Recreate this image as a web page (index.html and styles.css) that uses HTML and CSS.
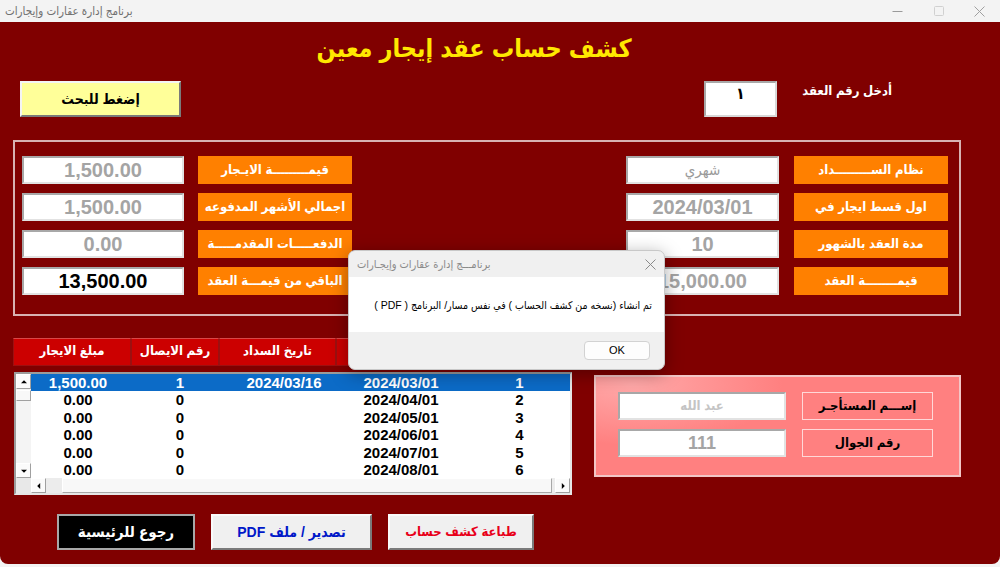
FILE: index.html
```html
<!DOCTYPE html>
<html lang="ar" dir="rtl">
<head>
    <meta charset="UTF-8">
    <title>برنامج إدارة عقارات وإيجارات</title>
    <link rel="stylesheet" href="styles.css">
</head>
<body>
    <div class="titlebar" dir="ltr">
        <span class="app-title">برنامج إدارة عقارات وإيجارات</span>
        <div class="win-buttons">
            <span><svg width="11" height="11" viewBox="0 0 11 11"><line x1="0.5" y1="5.5" x2="10.5" y2="5.5" stroke="#9a9a9a" stroke-width="1"/></svg></span>
            <span><svg width="11" height="11" viewBox="0 0 11 11"><rect x="1.5" y="0.5" width="9" height="9" rx="1" fill="none" stroke="#d0d0d0" stroke-width="1"/></svg></span>
            <span><svg width="11" height="11" viewBox="0 0 11 11"><path d="M0.5 0.5 L10.5 10.5 M10.5 0.5 L0.5 10.5" stroke="#a0a0a0" stroke-width="1"/></svg></span>
        </div>
    </div>

    <div class="form">
        <h1 class="heading">كشف حساب عقد إيجار معين</h1>

        <div class="search-row">
            <div class="contract">
                <span class="contract-label">أدخل رقم العقد</span>
                <div class="contract-box">١</div>
            </div>
            <div class="search-btn">إضغط للبحث</div>
        </div>

        <!-- بيانات العقد -->
        <div class="frame">
            <div class="field-grid">
                <div class="label">نظام الســـــــــداد</div>
                <div class="box text">شهري</div>
                <div class="label">اول قسط ايجار في</div>
                <div class="box">2024/03/01</div>
                <div class="label">مدة العقد بالشهور</div>
                <div class="box">10</div>
                <div class="label">قيمــــــــة العقد</div>
                <div class="box">15,000.00</div>
            </div>
            <div class="field-grid wide">
                <div class="label">قيمـــــــــة الايـجار</div>
                <div class="box">1,500.00</div>
                <div class="label">اجمالي الأشهر المدفوعه</div>
                <div class="box">1,500.00</div>
                <div class="label">الدفعـــــات المقدمـــــة</div>
                <div class="box">0.00</div>
                <div class="label">الباقي من قيمـــة العقد</div>
                <div class="box dark">13,500.00</div>
            </div>
        </div>

        <div class="lower">
            <div class="tenant">
                <div class="tenant-label">إســـم المستأجـر</div>
                <div class="tenant-box name">عبد الله</div>
                <div class="tenant-label">رقم الجوال</div>
                <div class="tenant-box">111</div>
            </div>

            <div class="table">
                <div class="thead">
                    <div>رقم القسط</div>
                    <div>تاريخ الاستحقاق</div>
                    <div>تاريخ السداد</div>
                    <div>رقم الايصال</div>
                    <div>مبلغ الايجار</div>
                </div>
                <div class="list">
                    <div class="rows">
                        <div class="row sel"><span>1</span><span>2024/03/01</span><span>2024/03/16</span><span>1</span><span>1,500.00</span></div>
                        <div class="row"><span>2</span><span>2024/04/01</span><span></span><span>0</span><span>0.00</span></div>
                        <div class="row"><span>3</span><span>2024/05/01</span><span></span><span>0</span><span>0.00</span></div>
                        <div class="row"><span>4</span><span>2024/06/01</span><span></span><span>0</span><span>0.00</span></div>
                        <div class="row"><span>5</span><span>2024/07/01</span><span></span><span>0</span><span>0.00</span></div>
                        <div class="row"><span>6</span><span>2024/08/01</span><span></span><span>0</span><span>0.00</span></div>
                    </div>
                    <div class="vscroll">
                        <div class="arrow up"></div>
                        <div class="vthumb"></div>
                        <div class="track"></div>
                        <div class="arrow down"></div>
                    </div>
                    <div class="hscroll">
                        <div class="arrow right"></div>
                        <div class="htrack"><div class="hthumb"></div></div>
                        <div class="arrow left"></div>
                    </div>
                    <div class="corner"></div>
                </div>
            </div>
        </div>

        <div class="actions">
            <div class="btn print">طباعة كشف حساب</div>
            <div class="btn export">تصدير / ملف PDF</div>
            <div class="btn back">رجوع للرئيسية</div>
        </div>
    </div>

    <!-- رسالة التصدير -->
    <div class="dialog">
        <div class="dialog-head" dir="ltr">
            <span>برنامـــج إدارة عقارات وإيجـارات</span>
            <svg width="11" height="11" viewBox="0 0 11 11"><path d="M0.5 0.5 L10.5 10.5 M10.5 0.5 L0.5 10.5" stroke="#8a8a8a" stroke-width="1"/></svg>
        </div>
        <div class="dialog-body">تم انشاء (نسخه من كشف الحساب ) في نفس مسار/ البرنامج ( PDF )</div>
        <div class="dialog-foot" dir="ltr">
            <div class="ok">OK</div>
        </div>
    </div>
</body>
</html>
```

FILE: styles.css
```css
* {
    box-sizing: border-box;
}
html, body {
    margin: 0;
}
body {
    width: 1000px;
    height: 567px;
    overflow: hidden;
    background: #f3f3f3;
    font-family: "Liberation Sans", "DejaVu Sans Condensed", "DejaVu Sans", sans-serif;
}
.titlebar {
    height: 22px;
    display: flex;
    align-items: center;
    justify-content: space-between;
    padding-left: 5px;
    color: #707070;
    font-size: 11.5px;
}
.win-buttons {
    display: flex;
}
.win-buttons span {
    width: 41px;
    height: 22px;
    display: flex;
    align-items: center;
    justify-content: center;
}
.form {
    height: 542px;
    background: #800000;
    border-radius: 0 0 8px 8px;
    padding: 10px 39px 0 13px;
}
.heading {
    margin: 0;
    padding-right: 26px;
    text-align: center;
    font-size: 25px;
    line-height: 32px;
    color: #ffe800;
    font-weight: bold;
}
.search-row {
    display: flex;
    justify-content: space-between;
    align-items: flex-start;
    margin-top: 17px;
    height: 36px;
}
.contract {
    display: flex;
    align-items: flex-start;
    gap: 25px;
    margin-right: 69px;
}
.contract-label {
    width: 90px;
    color: #fff;
    font-weight: bold;
    font-size: 13px;
    line-height: 18px;
    padding-top: 1px;
    white-space: nowrap;
}
.contract-box {
    width: 73px;
    height: 36px;
    background: #fff;
    border: 2px solid;
    border-color: #a8a8a8 #d8d8d8 #d8d8d8 #a8a8a8;
    text-align: center;
    font-weight: bold;
    font-size: 16px;
    line-height: 18px;
    padding-top: 2px;
}
.search-btn {
    width: 161px;
    height: 36px;
    margin-left: 7px;
    background: #ffff99;
    border: 2px solid;
    border-color: #f4f4f4 #7a7a7a #7a7a7a #f4f4f4;
    text-align: center;
    font-weight: bold;
    font-size: 14px;
    line-height: 32px;
}
.frame {
    margin-top: 23px;
    height: 176px;
    border: 2px solid #d8b2b2;
    padding: 14px 11px 0 7px;
    display: flex;
    justify-content: space-between;
    align-items: flex-start;
}
.field-grid {
    display: grid;
    grid-template-columns: 154px 153px;
    grid-auto-rows: 28px;
    column-gap: 15px;
    row-gap: 9px;
}
.field-grid.wide {
    grid-template-columns: 154px 162px;
    column-gap: 14px;
}
.label {
    background: #ff8000;
    color: #fff;
    font-weight: bold;
    font-size: 13px;
    line-height: 27px;
    text-align: center;
    white-space: nowrap;
    overflow: hidden;
}
.box {
    background: #fff;
    border: 2px solid;
    border-color: #a8a8a8 #e2e2e2 #e2e2e2 #a8a8a8;
    text-align: center;
    font-size: 20px;
    font-weight: bold;
    line-height: 24px;
    color: #a4a4a4;
}
.box.text {
    font-size: 15px;
    font-weight: normal;
    color: #9a9a9a;
}
.box.dark {
    color: #000;
}
.lower {
    display: flex;
    justify-content: space-between;
    align-items: flex-start;
    margin-top: 22px;
}
.tenant {
    width: 367px;
    height: 102px;
    margin-top: 37px;
    background: radial-gradient(ellipse 150px 60px at 10% 8%, #ffa8a8 0%, #ff8080 100%);
    border: 2px solid #f2c6c6;
    padding: 15px 26px 0 22px;
    display: grid;
    grid-template-columns: 131px 168px;
    grid-auto-rows: 28px;
    column-gap: 16px;
    row-gap: 9px;
    align-content: start;
}
.tenant-label {
    border: 1px solid #ffd8d8;
    text-align: center;
    font-weight: bold;
    font-size: 13px;
    line-height: 25px;
    color: #000;
    white-space: nowrap;
}
.tenant-box {
    background: #fff;
    border: 2px solid;
    border-color: #a8a8a8 #e2e2e2 #e2e2e2 #a8a8a8;
    text-align: center;
    font-weight: bold;
    font-size: 18px;
    line-height: 24px;
    color: #a4a4a4;
}
.tenant-box.name {
    font-size: 13px;
    color: #c4c4c4;
}
.table {
    width: 559px;
}
.thead {
    display: grid;
    grid-template-columns: 117px 119px 117px 88px 118px;
    height: 28px;
}
.thead div {
    background: #cc0000;
    color: #fff;
    font-weight: bold;
    font-size: 13px;
    line-height: 24px;
    text-align: center;
    border: 1px solid #9c1010;
    border-top-color: #d84848;
    white-space: nowrap;
    overflow: hidden;
}
.list {
    width: 558px;
    height: 123px;
    margin-top: 6px;
    background: #fff;
    border: 2px solid;
    border-color: #9c9c9c #e6e6e6 #e6e6e6 #9c9c9c;
    display: grid;
    grid-template-columns: 1fr 15px;
    grid-template-rows: 1fr 15px;
}
.rows {
    overflow: hidden;
}
.row {
    display: grid;
    grid-template-columns: 101px 136px 98px 110px 94px;
    height: 17.4px;
    line-height: 17.4px;
    font-size: 15px;
    font-weight: bold;
    text-align: center;
    color: #000;
}
.row.sel {
    background: #0c6bc7;
    color: #fff;
}
.vscroll {
    display: flex;
    flex-direction: column;
    background: #f4f4f4;
}
.track {
    flex: 1;
}
.arrow {
    width: 15px;
    height: 15px;
    background: #fbfbfb;
    border: 1px solid;
    border-color: #fff #a0a0a0 #a0a0a0 #fff;
    position: relative;
}
.arrow::before {
    content: "";
    position: absolute;
    left: 50%;
    top: 50%;
    width: 0;
    height: 0;
    border: 3px solid transparent;
}
.arrow.up::before {
    border-bottom: 3px solid #000;
    border-top: none;
    transform: translate(-50%, -60%);
}
.arrow.down::before {
    border-top: 3px solid #000;
    border-bottom: none;
    transform: translate(-50%, -40%);
}
.arrow.left::before {
    border-right: 3px solid #000;
    border-left: none;
    transform: translate(-60%, -50%);
}
.arrow.right::before {
    border-left: 3px solid #000;
    border-right: none;
    transform: translate(-40%, -50%);
}
.vthumb {
    height: 11px;
    margin-top: 1px;
    background: #f8f8f8;
    border: 1px solid;
    border-color: #fff #a0a0a0 #a0a0a0 #fff;
}
.hscroll {
    grid-column: 1;
    display: flex;
    background: #ececec;
}
.htrack {
    flex: 1;
    display: flex;
    padding: 0 3px 0 16px;
}
.hthumb {
    flex: 1;
    background: #f8f8f8;
    border: 1px solid;
    border-color: #fff #a8a8a8 #a8a8a8 #fff;
}
.corner {
    background: #e8e8e8;
}
.actions {
    display: flex;
    justify-content: flex-end;
    gap: 16px;
    margin-top: 19px;
    padding-left: 44px;
}
.btn {
    height: 36px;
    background: #f0f0f0;
    border: 2px solid;
    border-color: #fafafa #7a7a7a #7a7a7a #fafafa;
    text-align: center;
    font-weight: bold;
    font-size: 14px;
    line-height: 32px;
    white-space: nowrap;
}
.btn.print {
    width: 146px;
    color: #e8001a;
    font-size: 13px;
}
.btn.export {
    width: 161px;
    color: #0018c8;
}
.btn.back {
    width: 138px;
    background: #000;
    color: #fff;
    border-color: #a8a8a8;
    font-size: 15px;
}
.dialog {
    position: absolute;
    left: 348px;
    top: 250px;
    width: 317px;
    height: 120px;
    background: #f0f0f0;
    border: 1px solid #c8c8c8;
    border-radius: 7px;
    box-shadow: 0 4px 18px rgba(0, 0, 0, 0.35);
    overflow: hidden;
}
.dialog-head {
    height: 26px;
    display: flex;
    align-items: center;
    justify-content: space-between;
    padding: 0 8px 0 8px;
    color: #8a8a8a;
    font-size: 11px;
}
.dialog-body {
    height: 55px;
    background: #fff;
    padding: 0 12px;
    display: flex;
    align-items: center;
    font-size: 10.5px;
    color: #000;
    white-space: nowrap;
}
.dialog-foot {
    display: flex;
    justify-content: flex-end;
    padding: 9px 14px 0 0;
}
.ok {
    width: 66px;
    height: 19px;
    background: #fdfdfd;
    border: 1px solid #d2d2d2;
    border-radius: 4px;
    font-size: 11px;
    line-height: 17px;
    text-align: center;
    color: #000;
}
```
